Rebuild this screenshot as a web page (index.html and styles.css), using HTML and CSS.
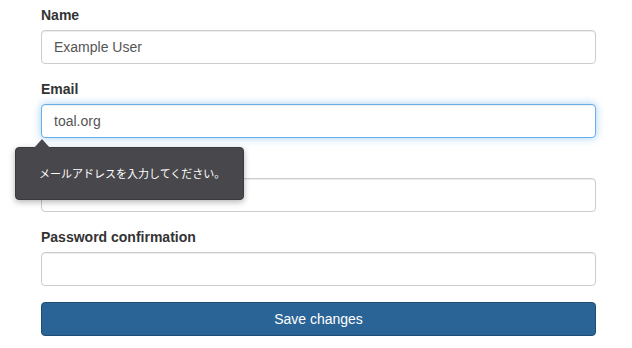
FILE: index.html
```html
<!DOCTYPE html>
<html lang="ja">
<head>
    <meta charset="UTF-8">
    <title>Edit user</title>
    <link rel="stylesheet" href="styles.css">
</head>
<body>
    <div class="page">
        <form class="user-form">
            <div class="field">
                <label for="name">Name</label>
                <input id="name" type="text" value="Example User">
            </div>
            <div class="field">
                <label for="email">Email</label>
                <input id="email" class="focused" type="email" value="toal.org">
            </div>
            <div class="field">
                <label for="password">Password</label>
                <input id="password" type="password">
            </div>
            <div class="field">
                <label for="confirm">Password confirmation</label>
                <input id="confirm" type="password">
            </div>
            <button type="button" class="save">Save changes</button>
        </form>

        <div class="bubble">メールアドレスを入力してください。</div>
    </div>
</body>
</html>
```

FILE: styles.css
```css
* {
    margin: 0;
    padding: 0;
    box-sizing: border-box;
}

body {
    background: #ffffff;
    font-family: "Liberation Sans", Arial, sans-serif;
    font-size: 14px;
    line-height: 20px;
    color: #333333;
}

.page {
    position: relative;
    padding: 5px 36px 0 41px;
}

.user-form {
    display: flex;
    flex-direction: column;
}

.field {
    display: flex;
    flex-direction: column;
    margin-bottom: 15px;
}

label {
    font-weight: bold;
    margin-bottom: 5px;
}

input {
    height: 34px;
    padding: 6px 12px;
    font-family: inherit;
    font-size: 14px;
    color: #555555;
    background: #ffffff;
    border: 1px solid #cccccc;
    border-radius: 4px;
    box-shadow: inset 0 1px 1px rgba(0, 0, 0, 0.075);
    outline: none;
}

input.focused {
    border-color: #66afe9;
    box-shadow: inset 0 1px 1px rgba(0, 0, 0, 0.075), 0 0 8px rgba(102, 175, 233, 0.6);
}

.save {
    margin-top: 1px;
    height: 34px;
    font-family: inherit;
    font-size: 14px;
    color: #ffffff;
    background: #2a6496;
    border: 1px solid #204d74;
    border-radius: 4px;
    cursor: pointer;
}

/* browser validation bubble */
.bubble {
    position: absolute;
    left: 15px;
    top: 147px;
    width: 229px;
    height: 53px;
    padding: 0 0 0 23px;
    display: flex;
    align-items: center;
    font-family: "Liberation Sans", "Noto Sans CJK JP", sans-serif;
    font-size: 11px;
    color: #ffffff;
    background: #48474c;
    border: 1px solid #3a393d;
    border-radius: 4px;
    box-shadow: 0 2px 6px rgba(0, 0, 0, 0.3);
}

.bubble::before {
    content: "";
    position: absolute;
    left: 18px;
    top: -9px;
    border-left: 8px solid transparent;
    border-right: 8px solid transparent;
    border-bottom: 9px solid #48474c;
}
```
